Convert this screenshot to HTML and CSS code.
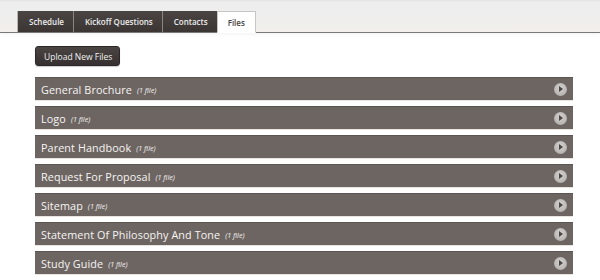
FILE: index.html
```html
<!DOCTYPE html>
<html>
<head>
<meta charset="utf-8">
<link rel="stylesheet" href="styles.css">
</head>
<body>
<div class="topbar">
  <nav class="tabs">
    <span class="tab">Schedule</span>
    <span class="tab">Kickoff Questions</span>
    <span class="tab">Contacts</span>
    <span class="tab active">Files</span>
  </nav>
</div>
<main class="content">
  <button class="upload">Upload New Files</button>
  <ul class="list">
    <li class="row"><span class="name">General Brochure</span><span class="count">(1 file)</span><span class="arrow"></span></li>
    <li class="row"><span class="name">Logo</span><span class="count">(1 file)</span><span class="arrow"></span></li>
    <li class="row"><span class="name">Parent Handbook</span><span class="count">(1 file)</span><span class="arrow"></span></li>
    <li class="row"><span class="name">Request For Proposal</span><span class="count">(1 file)</span><span class="arrow"></span></li>
    <li class="row"><span class="name">Sitemap</span><span class="count">(1 file)</span><span class="arrow"></span></li>
    <li class="row"><span class="name">Statement Of Philosophy And Tone</span><span class="count">(1 file)</span><span class="arrow"></span></li>
    <li class="row"><span class="name">Study Guide</span><span class="count">(1 file)</span><span class="arrow"></span></li>
  </ul>
</main>
</body>
</html>
```
FILE: styles.css
```css
* { box-sizing: border-box; }
html, body { margin: 0; padding: 0; background: #fff; }
body { font-family: "Open Sans", "DejaVu Sans", sans-serif; width: 600px; height: 280px; overflow: hidden; }

.topbar {
  height: 33px;
  background: linear-gradient(#e6e5e4 0, #e6e5e4 1px, #eeeeee 2px, #eeeeee 14px, #f2efec 30px);
  border-bottom: 1px solid #7a7877;
  box-shadow: 0 2px 3px rgba(0,0,0,0.04);
  padding-left: 17px;
  display: flex;
  align-items: flex-end;
}
.tabs { display: flex; margin-bottom: -1px; }
.tab {
  height: 21px;
  padding: 0 9px 0 11px;
  background: linear-gradient(#4a4442, #3b3634);
  color: #ececec;
  font-size: 8px;
  font-weight: 600;
  display: flex;
  align-items: center;
  border-left: 1px solid #8a8482;
}
.tab:first-child { border-left: 1px solid #b9b5b3; }
.tab.active {
  background: #fff;
  color: #444;
  height: 22px;
  border: 1px solid #c8c6c5;
  border-bottom: 1px solid #fff;
  padding: 0 10px 0 10px;
}

.content { padding: 13px 27px 0 35px; }
.upload {
  display: block;
  height: 20px;
  padding: 0 7px 0 8px;
  background: linear-gradient(#4a4543, #363130);
  color: #f2f2f2;
  font-family: "Open Sans", "DejaVu Sans", sans-serif;
  font-size: 8.5px;
  font-weight: 400;
  border: 1px solid #2c2827;
  border-radius: 3px;
  box-shadow: 0 1px 1px rgba(0,0,0,0.2);
  margin: 0 0 11px 0;
}
.list { list-style: none; margin: 0; padding: 0; display: flex; flex-direction: column; gap: 6px; }
.row {
  height: 23px;
  background: #6d6562;
  border-top: 1px solid #5c5553;
  display: flex;
  align-items: center;
  padding: 0 6px;
  color: #f6f4f2;
  box-shadow: 0 1px 0 #e9e4e0;
}
.name { font-size: 10.8px; letter-spacing: 0.1px; }
.count { font-size: 7.2px; font-style: italic; margin-left: 5px; margin-top: 2px; }
.arrow {
  margin-left: auto;
  width: 13px; height: 13px;
  border-radius: 50%;
  background: radial-gradient(circle at 50% 40%, #d6d4d2, #a9a5a3);
  position: relative;
  margin-right: 0;
}
.arrow::after {
  content: "";
  position: absolute;
  left: 5px; top: 3.5px;
  border-left: 4px solid #4b4543;
  border-top: 3px solid transparent;
  border-bottom: 3px solid transparent;
}
```
